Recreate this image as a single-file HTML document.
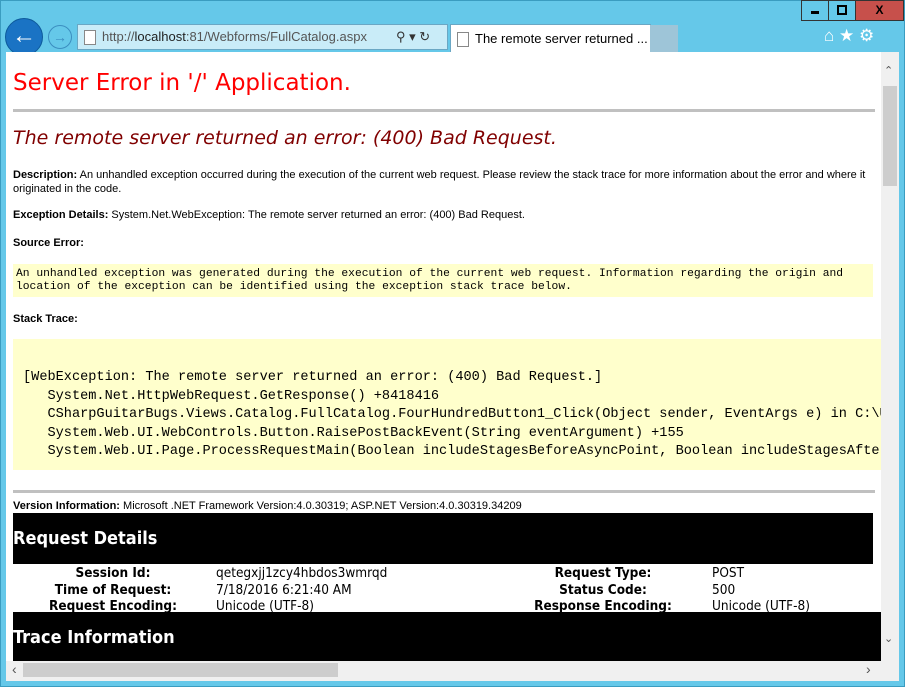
<!DOCTYPE html>
<html><head><style>
body{margin:0;width:905px;height:687px;background:#fff;position:relative;overflow:hidden;font-family:"Liberation Sans",sans-serif}
.frame{position:absolute;left:0;top:0;width:903px;height:685px;background:#65c8e9;border:1px solid #3a9cc0}
.content{position:absolute;left:6px;top:52px;width:893px;height:629px;background:#fff;overflow:hidden}
.a{position:absolute;white-space:nowrap}
.t{font-size:11px;color:#000}
.mono{font-family:"Liberation Mono",monospace}
.v{font-family:"DejaVu Sans",sans-serif}
.c{font-family:"DejaVu Sans Condensed","Liberation Sans Narrow",sans-serif}
</style></head><body>
<div class="frame"></div>
<div class="a" style="left:801px;top:0;width:26px;height:19px;background:#65c8e9;border:1px solid #333;"><div style="position:absolute;left:9px;top:10px;width:8px;height:3px;background:#000"></div></div>
<div class="a" style="left:828px;top:0;width:26px;height:19px;background:#65c8e9;border:1px solid #333;"><div style="position:absolute;left:8px;top:4px;width:6px;height:6px;border:2px solid #000"></div></div>
<div class="a" style="left:855px;top:0;width:47px;height:19px;background:#c7504b;border:1px solid #333;font-weight:bold;font-size:12px;text-align:center;line-height:19px">X</div>
<div class="a" style="left:5px;top:18px;width:36px;height:36px;border-radius:50%;background:#1a73c4;border:1px solid #0d5a9c;color:#fff;font-size:24px;font-weight:bold;text-align:center;line-height:34px">&#8592;</div>
<div class="a" style="left:48px;top:25px;width:22px;height:22px;border-radius:50%;border:1px solid #3b8ec0;color:#3b8ec0;font-size:14px;text-align:center;line-height:22px">&#8594;</div>
<div class="a" style="left:77px;top:24px;width:369px;height:24px;background:#c9ecf8;border:1px solid #6aa7c4;font-size:13px;line-height:24px;color:#555">
<span style="display:inline-block;width:10px;height:13px;border:1px solid #888;background:#fff;vertical-align:middle;margin:0 6px 0 6px"></span>http://<b style="color:#222;font-weight:normal">localhost</b>:81/Webforms/FullCatalog.aspx
<span style="position:absolute;left:318px;color:#333">&#9906; &#9662; &#8635;</span></div>
<div class="a" style="left:450px;top:24px;width:199px;height:28px;background:#fff;border:1px solid #6aa7c4;border-bottom:none;font-size:13px;line-height:28px;color:#000">
<span style="display:inline-block;width:10px;height:13px;border:1px solid #888;vertical-align:middle;margin:0 6px 0 6px"></span>The remote server returned ... <span style="color:#777">✕</span></div>
<div class="a" style="left:650px;top:25px;width:28px;height:27px;background:#9ec5d8"></div>
<div class="a" style="left:824px;top:26px;font-size:17px;color:#fff">⌂ ★ ⚙</div>

<div class="content">
<div class="a v" style="left:7px;top:18px;font-size:23px;color:#f00">Server Error in '/' Application.</div>
<div class="a" style="left:7px;top:57px;width:862px;height:3px;background:#c0c0c0"></div>
<div class="a v" style="left:7px;top:75px;font-size:19px;font-style:italic;color:#800000">The remote server returned an error: (400) Bad Request.</div>
<div class="a t" style="left:7px;top:116px;line-height:14px;white-space:normal;width:862px"><b>Description:</b> An unhandled exception occurred during the execution of the current web request. Please review the stack trace for more information about the error and where it originated in the code.</div>
<div class="a t" style="left:7px;top:157px"><b>Exception Details:</b> System.Net.WebException: The remote server returned an error: (400) Bad Request.</div>
<div class="a t" style="left:7px;top:185px"><b>Source Error:</b></div>
<div class="a mono" style="left:7px;top:212px;width:860px;height:33px;background:#ffffcc;font-size:11.3px;line-height:13px;padding:4px 0 0 3px;box-sizing:border-box">An unhandled exception was generated during the execution of the current web request. Information regarding the origin and<br>location of the exception can be identified using the exception stack trace below.</div>
<div class="a t" style="left:7px;top:261px"><b>Stack Trace:</b></div>
<div class="a mono" style="left:7px;top:287px;width:880px;height:131px;background:#ffffcc;font-size:13.6px;line-height:18.5px;padding:30px 0 0 10px;box-sizing:border-box;color:#000">[WebException: The remote server returned an error: (400) Bad Request.]<br>&nbsp;&nbsp;&nbsp;System.Net.HttpWebRequest.GetResponse() +8418416<br>&nbsp;&nbsp;&nbsp;CSharpGuitarBugs.Views.Catalog.FullCatalog.FourHundredButton1_Click(Object sender, EventArgs e) in C:\Us<br>&nbsp;&nbsp;&nbsp;System.Web.UI.WebControls.Button.RaisePostBackEvent(String eventArgument) +155<br>&nbsp;&nbsp;&nbsp;System.Web.UI.Page.ProcessRequestMain(Boolean includeStagesBeforeAsyncPoint, Boolean includeStagesAfterA</div>
<div class="a" style="left:7px;top:438px;width:862px;height:3px;background:#c0c0c0"></div>
<div class="a" style="left:7px;top:448px;font-size:11px"><b>Version Information:</b> Microsoft .NET Framework Version:4.0.30319; ASP.NET Version:4.0.30319.34209</div>
<div class="a c" style="left:7px;top:461px;width:860px;height:51px;background:#000;color:#fff;font-size:18px;font-weight:bold;line-height:51px">Request Details</div>
<div class="a c" style="left:7px;top:513px;font-size:13.5px;line-height:16.5px">
<div style="position:absolute;left:0;width:200px;text-align:center;font-weight:bold">Session Id:<br>Time of Request:<br>Request Encoding:</div>
<div style="position:absolute;left:203px">qetegxjj1zcy4hbdos3wmrqd<br>7/18/2016 6:21:40 AM<br>Unicode (UTF-8)</div>
<div style="position:absolute;left:492px;width:196px;text-align:center;font-weight:bold">Request Type:<br>Status Code:<br>Response Encoding:</div>
<div style="position:absolute;left:699px">POST<br>500<br>Unicode (UTF-8)</div>
</div>
<div class="a c" style="left:7px;top:560px;width:868px;height:51px;background:#000;color:#fff;font-size:18px;font-weight:bold;line-height:51px">Trace Information</div>
<div class="a" style="left:875px;top:0;width:18px;height:609px;background:#f0f0f0"></div>
<div class="a" style="left:877px;top:34px;width:14px;height:100px;background:#cdcdcd"></div>
<div class="a" style="left:878px;top:12px;font-size:11px;color:#555">⌃</div>
<div class="a" style="left:878px;top:580px;font-size:11px;color:#555">⌄</div>
<div class="a" style="left:0;top:609px;width:893px;height:20px;background:#f0f0f0"></div>
<div class="a" style="left:17px;top:611px;width:315px;height:14px;background:#cdcdcd"></div>
<div class="a" style="left:6px;top:609px;font-size:14px;color:#555">‹</div>
<div class="a" style="left:860px;top:609px;font-size:14px;color:#555">›</div>
</div>
</body></html>
